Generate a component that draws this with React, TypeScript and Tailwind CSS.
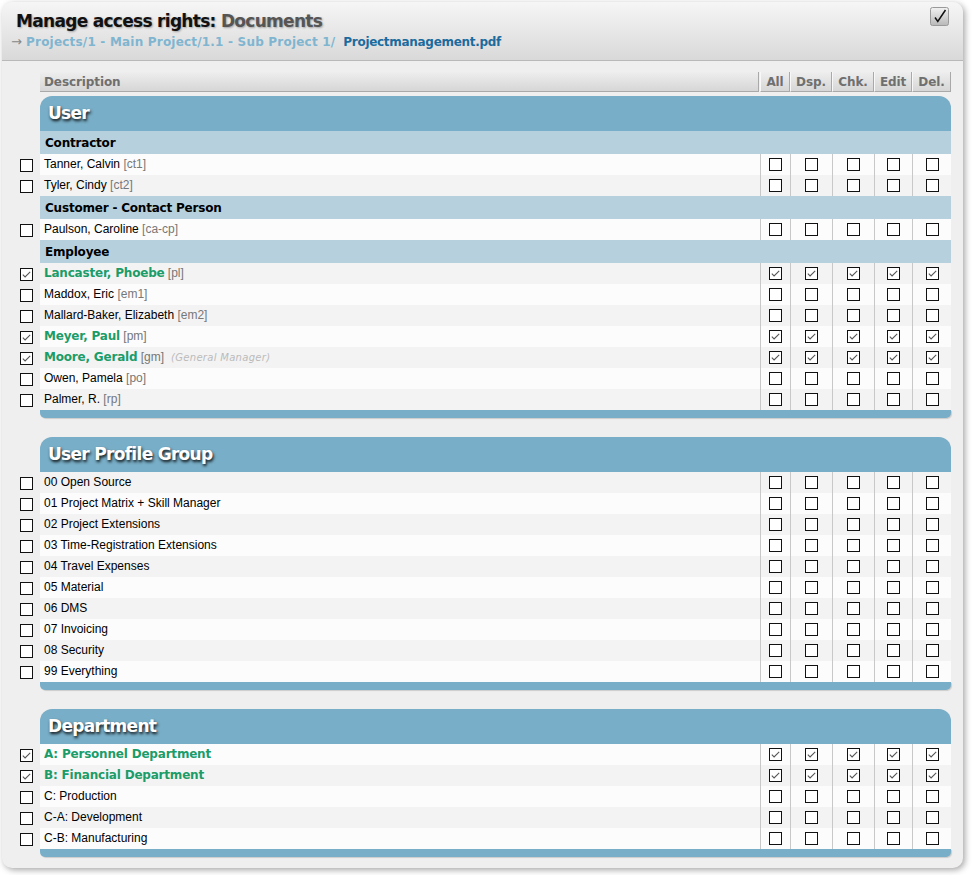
import React from "react";

type Item = { name: string; code?: string; note?: string; on?: boolean; alt?: boolean };
type Group = { title?: string; items: Item[] };
type Section = { title: string; groups: Group[] };

const COLS = [
  { label: "All", w: "w-[30px]" },
  { label: "Dsp.", w: "w-[42px]" },
  { label: "Chk.", w: "w-[42px]" },
  { label: "Edit", w: "w-[38px]" },
  { label: "Del.", w: "w-[39px]" },
];

const sections: Section[] = [
  {
    title: "User",
    groups: [
      {
        title: "Contractor",
        items: [
          { name: "Tanner, Calvin", code: "ct1" },
          { name: "Tyler, Cindy", code: "ct2", alt: true },
        ],
      },
      {
        title: "Customer - Contact Person",
        items: [{ name: "Paulson, Caroline", code: "ca-cp" }],
      },
      {
        title: "Employee",
        items: [
          { name: "Lancaster, Phoebe", code: "pl", on: true, alt: true },
          { name: "Maddox, Eric", code: "em1" },
          { name: "Mallard-Baker, Elizabeth", code: "em2", alt: true },
          { name: "Meyer, Paul", code: "pm", on: true },
          { name: "Moore, Gerald", code: "gm", note: "(General Manager)", on: true, alt: true },
          { name: "Owen, Pamela", code: "po" },
          { name: "Palmer, R.", code: "rp", alt: true },
        ],
      },
    ],
  },
  {
    title: "User Profile Group",
    groups: [
      {
        items: [
          "00 Open Source",
          "01 Project Matrix + Skill Manager",
          "02 Project Extensions",
          "03 Time-Registration Extensions",
          "04 Travel Expenses",
          "05 Material",
          "06 DMS",
          "07 Invoicing",
          "08 Security",
          "99 Everything",
        ].map((name, i) => ({ name, alt: i % 2 === 0 })),
      },
    ],
  },
  {
    title: "Department",
    groups: [
      {
        items: [
          { name: "A: Personnel Department", on: true },
          { name: "B: Financial Department", on: true, alt: true },
          { name: "C: Production" },
          { name: "C-A: Development", alt: true },
          { name: "C-B: Manufacturing" },
        ],
      },
    ],
  },
];

function Box({ checked }: { checked?: boolean }) {
  return (
    <svg width="13" height="13" viewBox="0 0 13 13" className="block">
      <rect x="0.5" y="0.5" width="12" height="12" fill="#fff" stroke="#111" />
      {checked && (
        <path d="M2.8 6.6 L5.1 8.9 L10.2 3.9" fill="none" stroke="#555" strokeWidth="1.1" />
      )}
    </svg>
  );
}

function Row({ item }: { item: Item }) {
  return (
    <div className="flex h-[21px]">
      <div className="flex w-[38px] shrink-0 justify-end pr-[7px] pt-[5px]">
        <Box checked={item.on} />
      </div>
      <div className={`flex flex-1 ${item.alt ? "bg-[#f3f3f3]" : "bg-[#fcfcfc]"}`}>
        <div className="flex-1 truncate pl-[4px] leading-[16px]">
          {item.on ? (
            <span className="font-['DejaVu_Sans',sans-serif] text-[12px] font-bold tracking-[-0.2px] text-[#1b9c69]">
              {item.name}
            </span>
          ) : (
            <span className="font-['Liberation_Sans',Arial,sans-serif] text-[12px] text-black">
              {item.name}
            </span>
          )}
          {item.code && (
            <span className="font-['Liberation_Sans',Arial,sans-serif] text-[12px] text-[#777]">
              {" "}[{item.code}]
            </span>
          )}
          {item.note && (
            <span className="ml-[7px] font-['DejaVu_Sans',sans-serif] text-[10px] italic tracking-[0.3px] text-[#bbb]">
              {item.note}
            </span>
          )}
        </div>
        {COLS.map((c) => (
          <div
            key={c.label}
            className={`${c.w} flex shrink-0 items-center justify-center border-l border-[#c8c8c8]`}
          >
            <Box checked={item.on} />
          </div>
        ))}
      </div>
    </div>
  );
}

function Block({ section, last }: { section: Section; last?: boolean }) {
  return (
    <div className={last ? "" : "mb-[19px]"}>
      <div className="ml-[38px] flex h-[35px] items-center rounded-t-[12px] bg-[#78aec7] pl-[8px] font-['DejaVu_Sans',sans-serif] text-[17px] font-bold tracking-[-0.7px] text-white [text-shadow:1px_2px_3px_rgba(0,0,0,0.9)]">
        {section.title}
      </div>
      {section.groups.map((g, gi) => (
        <div key={gi}>
          {g.title && (
            <div className="ml-[38px] flex h-[23px] items-center bg-[#b6d0de] pl-[5px] font-['DejaVu_Sans',sans-serif] text-[12px] font-bold tracking-[-0.2px] text-black">
              {g.title}
            </div>
          )}
          {g.items.map((it) => (
            <Row key={it.name} item={it} />
          ))}
        </div>
      ))}
      <div className="ml-[38px] h-[8px] rounded-b-[5px] bg-[#78aec7] shadow-[1px_1px_1px_rgba(0,0,0,0.15)]" />
    </div>
  );
}

export default function App() {
  return (
    <main className="min-h-screen bg-white pl-[2px] pt-[2px]">
      <section className="w-[961px] overflow-hidden rounded-[10px] bg-[#efefef] shadow-[2px_2px_6px_rgba(0,0,0,0.35)]">
        <div className="relative h-[59px] border-b border-[#b9b9b9] bg-gradient-to-b from-[#f6f6f6] to-[#d9d9d9]">
          <div className="pl-[14px] pt-[9px] font-['DejaVu_Sans',sans-serif] text-[17px] font-bold leading-[20px] tracking-[-0.7px] [text-shadow:1px_1px_2px_rgba(0,0,0,0.3)]">
            <span className="text-[#111]">Manage access rights: </span>
            <span className="text-[#555]">Documents</span>
          </div>
          <div className="mt-[3px] pl-[9px] font-['DejaVu_Sans',sans-serif] text-[12px] leading-[16px]">
            <span className="text-[13px] font-normal text-[#888]">→ </span>
            <span className="font-bold tracking-[0.2px] text-[#7fb5d0]">
              Projects/1 - Main Project/1.1 - Sub Project 1/
            </span>
            <span className="ml-[8px] font-bold tracking-[-0.3px] text-[#1b6c9e]">Projectmanagement.pdf</span>
          </div>
          <div className="absolute right-[14px] top-[5px]">
            <svg width="19" height="19" viewBox="0 0 19 19">
              <defs>
                <linearGradient id="btn" x1="0" y1="0" x2="0" y2="1">
                  <stop offset="0" stopColor="#f2f2f2" />
                  <stop offset="1" stopColor="#b8b8b8" />
                </linearGradient>
              </defs>
              <rect x="0.5" y="0.5" width="18" height="18" rx="2" fill="url(#btn)" stroke="#9a9a9a" />
              <path d="M5 10.5 L7.8 14.5 L15.5 3" fill="none" stroke="#111" strokeWidth="1.5" />
            </svg>
          </div>
        </div>

        <div className="pb-[11px] pr-[12px] pt-[11px]">
          <div className="ml-[38px] flex h-[20px] font-['DejaVu_Sans',sans-serif] text-[12px] font-bold tracking-[-0.1px] text-[#6f6f6f]">
            <div className="mr-[1px] flex flex-1 items-center border-b border-r border-[#a9a9a9] bg-gradient-to-b from-[#eeeeee] to-[#d6d6d6] pl-[4px]">
              Description
            </div>
            {COLS.map((c) => (
              <div
                key={c.label}
                className={`${c.w} flex shrink-0 items-center justify-center border-b border-l border-r border-b-[#a9a9a9] border-l-[#f8f8f8] border-r-[#a9a9a9] bg-gradient-to-b from-[#eeeeee] to-[#d6d6d6]`}
              >
                {c.label}
              </div>
            ))}
          </div>
          <div className="mt-[4px]">
            {sections.map((s, i) => (
              <Block key={s.title} section={s} last={i === sections.length - 1} />
            ))}
          </div>
        </div>
      </section>
    </main>
  );
}
